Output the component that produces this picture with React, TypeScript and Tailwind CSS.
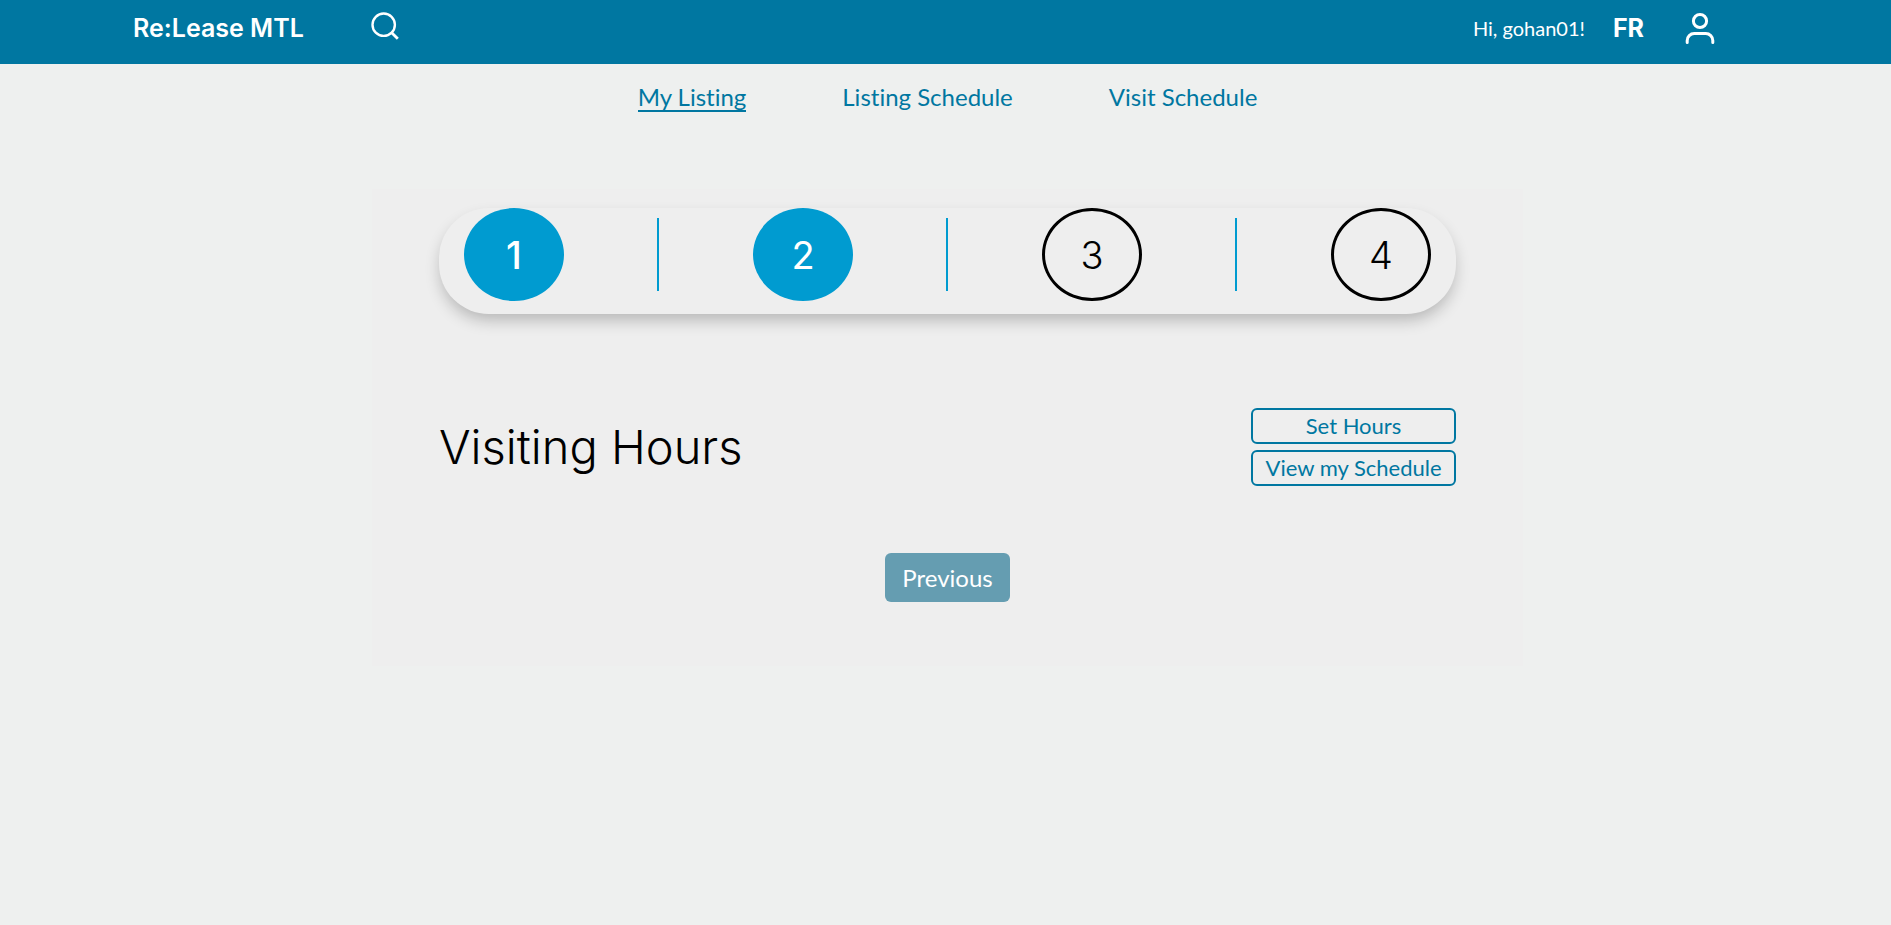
import React from "react";

const sections = [
  { label: "My Listing", active: true },
  { label: "Listing Schedule", active: false },
  { label: "Visit Schedule", active: false },
];

const steps = [
  { number: 1, done: true, current: true },
  { number: 2, done: true, current: false },
  { number: 3, done: false, current: false },
  { number: 4, done: false, current: false },
];

function SearchIcon() {
  return (
    <svg className="size-7" viewBox="0 0 28 28" fill="none" stroke="currentColor" strokeWidth="2.4" aria-hidden="true">
      <circle cx="12.7" cy="12.7" r="11.2" />
      <path d="M20.2 20.2l6.6 6.6" strokeWidth="2.8" />
    </svg>
  );
}

function UserIcon() {
  return (
    <svg className="h-8 w-8" viewBox="0 0 32 32" fill="none" stroke="currentColor" strokeWidth="3" strokeLinecap="round" aria-hidden="true">
      <circle cx="16" cy="9" r="6.6" />
      <path d="M3.2 30.4v-1.8a7 7 0 0 1 7-7h11.6a7 7 0 0 1 7 7v1.8" />
    </svg>
  );
}

function Header() {
  return (
    <header className="flex h-16 items-center bg-[#0077a1] pr-[175px] pb-2 pl-[133px] text-white">
      <a href="#home" className="font-[Inter,sans-serif] text-[25px] leading-8 font-semibold">
        Re:Lease MTL
      </a>
      <button type="button" aria-label="Search" className="mb-1 ml-[67px]">
        <SearchIcon />
      </button>
      <div className="ml-auto flex items-center">
        <span className="text-[20px] leading-8">Hi, gohan01!</span>
        <button type="button" className="ml-7 font-[Inter,sans-serif] text-[25px] leading-8 font-bold">
          FR
        </button>
        <button type="button" aria-label="Account" className="ml-10">
          <UserIcon />
        </button>
      </div>
    </header>
  );
}

function Stepper() {
  return (
    <ol className="flex h-[106px] items-start justify-between rounded-[50px] bg-[#eeeeee] px-[25px] shadow-[0_8px_16px_-2px_rgba(0,0,0,0.24)]">
      {steps.map((step, i) => (
        <React.Fragment key={step.number}>
          {i > 0 && <li aria-hidden="true" className="mt-[10px] h-[73px] w-[2px] bg-[#009bd0]" />}
          <li
            className={`flex h-[93px] w-[100px] items-center justify-center rounded-[50%] font-[Inter,sans-serif] text-[38px] leading-none ${
              step.done ? "bg-[#009bd0] text-white" : "border-3 border-black text-black"
            } ${step.current ? "font-medium" : step.done ? "font-normal" : "font-light"}`}
          >
            {step.number}
          </li>
        </React.Fragment>
      ))}
    </ol>
  );
}

export default function App() {
  return (
    <div className="min-h-screen bg-[#eef0ef] font-[Lato,sans-serif] text-black [font-variant-ligatures:none]">
      <Header />
      <div className="pl-1">
        <nav className="flex justify-center gap-24 pt-5 text-[#0077a1]">
          {sections.map((s) => (
            <a
              key={s.label}
              href="#listing"
              className={`border-b-2 text-[24px] leading-[26px] ${s.active ? "border-[#0077a1]" : "border-transparent"}`}
            >
              {s.label}
            </a>
          ))}
        </nav>
        <main className="mx-auto mt-[77px] w-[61%] bg-[#eeeeee] px-[67px] pt-[19px] pb-16">
          <Stepper />
          <div className="mt-[94px] flex items-center justify-between">
            <h1 className="font-[Inter,sans-serif] text-[47px] leading-[48px] font-light">Visiting Hours</h1>
            <div className="flex w-[205px] flex-col gap-[6px] text-[22px] leading-8 text-[#0077a1]">
              <button type="button" className="rounded-md border-2 border-[#0077a1]">
                Set Hours
              </button>
              <button type="button" className="rounded-md border-2 border-[#0077a1]">
                View my Schedule
              </button>
            </div>
          </div>
          <div className="mt-[67px] flex justify-center">
            <button type="button" className="h-[49px] w-[125px] rounded-md bg-[#659db1] text-[24px] leading-8 text-white">
              Previous
            </button>
          </div>
        </main>
      </div>
    </div>
  );
}
